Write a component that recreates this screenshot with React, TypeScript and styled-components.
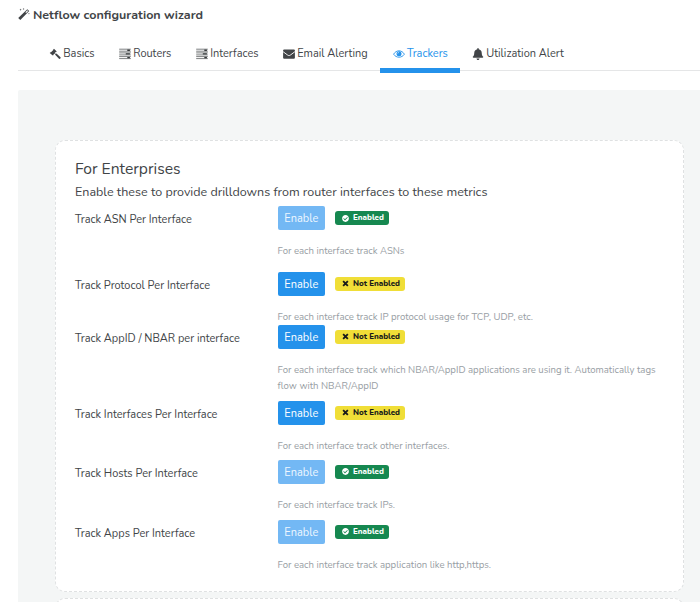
import React from 'react';
import styled, { createGlobalStyle, css } from 'styled-components';
import { FaBell, FaCheckCircle } from 'react-icons/fa';

const GlobalStyle = createGlobalStyle`
  * { box-sizing: border-box; }
  html, body { margin: 0; background: #fff; }
  body {
    overflow: hidden;
    color: #414447;
    font-family: Nunito, Lato, "Open Sans", sans-serif;
  }
`;

const Page = styled.main`
  display: flex;
  flex-direction: column;
  width: 700px;
  height: 602px;
  padding-left: 18px;
  overflow: hidden;
`;

const Title = styled.h1`
  display: flex;
  align-items: center;
  gap: 3px;
  height: 20px;
  margin: 5px 0 12px;
  font-size: 12.52px;
  line-height: 20px;
  font-weight: 700;
  svg { width: 12px; height: 12px; margin-top: -2px; }
`;

const Tabs = styled.nav`
  display: flex;
  height: 34px;
  padding-left: 19px;
  border-bottom: 1px solid #e5e6e7;
`;

const Tab = styled.a<{ $width: number; $active?: boolean }>`
  display: flex;
  align-items: center;
  gap: 2px;
  flex: none;
  width: ${p => p.$width}px;
  height: 36px;
  padding: 0 0 3px 12.2px;
  font-size: 10.96px;
  line-height: 16px;
  white-space: nowrap;
  svg { width: 12px; height: 12px; flex: none; }
  ${p => p.$active && css`
    padding: 2px 0 0 13px;
    color: #2492eb;
    border-bottom: 5px solid #2492eb;
  `}
`;

const Workspace = styled.section`
  display: flex;
  flex-direction: column;
  gap: 6px;
  flex: 1;
  margin-top: 19px;
  padding: 50px 16px 0 37px;
  background: #f4f6f6;
  border-top-left-radius: 2px;
`;

const Card = styled.section<{ $height: number }>`
  flex: none;
  width: 629px;
  height: ${p => p.$height}px;
  padding: 16px 19px 0;
  border: 1px dashed #dfe1e2;
  border-radius: 10px;
  background: #fff;
`;

const Heading = styled.h2`
  margin: 0;
  font-size: 15.63px;
  line-height: 24px;
  font-weight: 400;
`;

const Intro = styled.p`
  margin: 1px 0 4px;
  font-size: 12.5px;
  line-height: 20px;
`;

const Row = styled.div<{ $height: number }>`
  display: grid;
  grid-template-columns: 202.6px 1fr;
  height: ${p => p.$height}px;
`;

const Label = styled.div`
  padding-top: 4px;
  font-size: 10.97px;
  line-height: 20px;
`;

const Controls = styled.div`
  display: flex;
  align-items: center;
  gap: 10px;
  height: 24px;
`;

const EnableButton = styled.button`
  width: 47.4px;
  height: 24px;
  padding: 1px 0 0;
  border: 0;
  border-radius: 2px;
  background: #2492eb;
  color: #fff;
  font: 400 11px/23px Nunito, Lato, sans-serif;
  &:disabled { background: #73b8f4; color: #eef7ff; }
`;

const Badge = styled.span<{ $on: boolean }>`
  display: flex;
  align-items: center;
  gap: 4px;
  height: 14px;
  padding: 0 0 0 7px;
  width: ${p => (p.$on ? 54 : 70)}px;
  border-radius: 3px;
  background: ${p => (p.$on ? '#168850' : '#f0de37')};
  color: ${p => (p.$on ? '#fff' : '#17191b')};
  font: 800 8px/14px Nunito, "Open Sans", sans-serif;
  white-space: nowrap;
  svg { width: 7px; height: 7px; flex: none; }
`;

const Help = styled.p`
  margin: 13px 0 0;
  font-size: 9.6px;
  line-height: 16px;
  color: #989ea4;
`;

const WandIcon = () => (
  <svg viewBox="0 0 12 12" fill="currentColor">
    <path d="M9.3 1.2 11.2 3 2.3 12 .2 10Zm0 1.1L7.4 4.2l.8.8 1.9-1.9Z" fillRule="evenodd" />
    <path d="m2.6.6.3.9.9.3-.9.3-.3.9-.3-.9-.9-.3.9-.3Zm3-.6.3.7.7.3-.7.3-.3.7-.3-.7-.7-.3.7-.3ZM11 4.8l.2.7.6.2-.6.3-.2.6-.3-.6-.6-.3.6-.2Z" />
  </svg>
);

const GavelIcon = () => (
  <svg viewBox="0 0 12 12" fill="currentColor">
    <path d="M5 .7 7.7 3.4 7 4.2l-.4-.1-.8.9 1 1 .7-.6 4 3.8c.7.7-.8 2.2-1.5 1.5L6.2 6.8l.2-.3-1-1-.9.9.1.5-.8.7L.7 4.9l.8-.7.5.1L4.3 2l-.1-.5Z" />
  </svg>
);

const ServerIcon = () => (
  <svg viewBox="0 0 12 12">
    <path d="M.2 1.2h11.6M.2 3.2h11.6M.2 4.9h11.6M.2 6.9h11.6M.2 8.6h11.6M.2 10.6h11.6" stroke="#5c5f61" strokeWidth=".8" />
    <path d="M8.3 2.2h2.6M6.8 5.9h4.1M8.3 9.6h2.6" stroke="#35383a" strokeWidth="1.4" />
  </svg>
);

const MailIcon = () => (
  <svg viewBox="0 0 12 12">
    <rect x=".1" y="1.4" width="11.8" height="9.4" rx="1" fill="currentColor" />
    <path d="m.1 3.7 4.3 3.2c1.2.9 2 .9 3.2 0l4.3-3.2" fill="none" stroke="#fff" strokeWidth=".9" />
  </svg>
);

const EyeIcon = () => (
  <svg viewBox="0 0 12 12" fill="none" stroke="currentColor">
    <path d="M.6 6.2C3.2 1.7 8.8 1.7 11.4 6.2 8.8 10.2 3.2 10.2.6 6.2Z" strokeWidth=".9" />
    <circle cx="6" cy="5.7" r="2.5" fill="currentColor" stroke="none" />
    <path d="M4.7 5.6c0-.8.5-1.3 1.3-1.3" stroke="#fff" strokeWidth=".5" />
  </svg>
);

const CrossIcon = () => (
  <svg viewBox="0 0 8 8" fill="none" stroke="currentColor" strokeWidth="2.1">
    <path d="m1.3 1.3 5.4 5.4M6.7 1.3 1.3 6.7" />
  </svg>
);

interface Tracker {
  label: string;
  help: string;
  enabled: boolean;
  height: number;
}

const trackers: Tracker[] = [
  { label: 'Track ASN Per Interface', help: 'For each interface track ASNs', enabled: true, height: 65.6 },
  { label: 'Track Protocol Per Interface', help: 'For each interface track IP protocol usage for TCP, UDP, etc.', enabled: false, height: 53 },
  { label: 'Track AppID / NBAR per interface', help: 'For each interface track which NBAR/AppID applications are using it. Automatically tags flow with NBAR/AppID', enabled: false, height: 76 },
  { label: 'Track Interfaces Per Interface', help: 'For each interface track other interfaces.', enabled: false, height: 59.4 },
  { label: 'Track Hosts Per Interface', help: 'For each interface track IPs.', enabled: true, height: 59.6 },
  { label: 'Track Apps Per Interface', help: 'For each interface track application like http,https.', enabled: true, height: 60 },
];

export default function App() {
  return (
    <>
      <GlobalStyle />
      <Page>
        <Title><WandIcon />Netflow configuration wizard</Title>
        <Tabs>
          <Tab $width={70}><GavelIcon />Basics</Tab>
          <Tab $width={77}><ServerIcon />Routers</Tab>
          <Tab $width={87}><ServerIcon />Interfaces</Tab>
          <Tab $width={109}><MailIcon />Email Alerting</Tab>
          <Tab $width={80} $active><EyeIcon />Trackers</Tab>
          <Tab $width={105}><FaBell />Utilization Alert</Tab>
        </Tabs>
        <Workspace>
          <Card $height={452}>
            <Heading>For Enterprises</Heading>
            <Intro>Enable these to provide drilldowns from router interfaces to these metrics</Intro>
            {trackers.map(t => (
              <Row key={t.label} $height={t.height}>
                <Label>{t.label}</Label>
                <div>
                  <Controls>
                    <EnableButton disabled={t.enabled}>Enable</EnableButton>
                    <Badge $on={t.enabled}>
                      {t.enabled ? <FaCheckCircle /> : <CrossIcon />}
                      {t.enabled ? 'Enabled' : 'Not Enabled'}
                    </Badge>
                  </Controls>
                  <Help>{t.help}</Help>
                </div>
              </Row>
            ))}
          </Card>
          <Card $height={100} />
        </Workspace>
      </Page>
    </>
  );
}
